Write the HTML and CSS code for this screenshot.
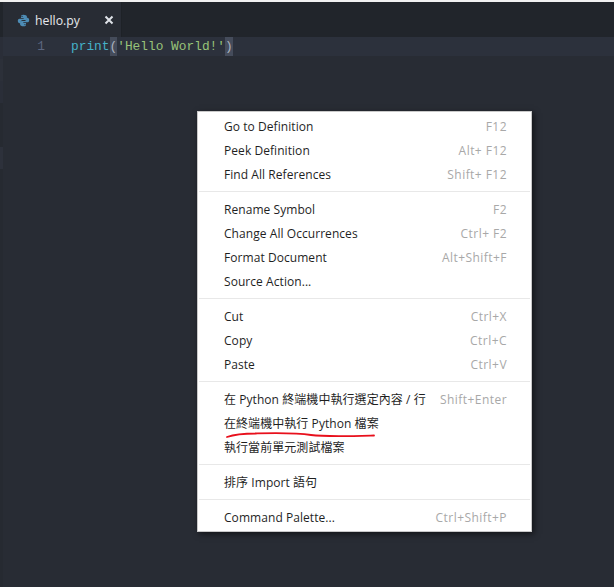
FILE: index.html
```html
<!DOCTYPE html>
<html lang="zh-Hant">
<head>
<meta charset="utf-8">
<title>hello.py</title>
<link rel="stylesheet" href="styles.css">
</head>
<body>
<div class="topline"></div>
<div class="workbench">
  <div class="activity">
    <div class="a-block a1"></div>
    <div class="a-block a2"></div>
    <div class="a-block a3"></div>
    <div class="a-block a4"></div>
    <div class="a-block a5"></div>
    <div class="a-block a6"></div>
  </div>
  <div class="main">
    <div class="tabbar">
      <div class="tab">
        <svg class="py" viewBox="0 0 16 16" width="13" height="13" aria-hidden="true">
          <path fill="#4d8cb5" d="M7.900 1C5.200 1 4.900 2.100 4.900 3.200V5h3.300v.7H3.200C1.900 5.700 1 6.800 1 8.400s.9 3.100 2.200 3.100h1.500V9.600c0-1.300 1.100-2.300 2.400-2.300h3.200c1.100 0 1.900-.9 1.900-1.900V3.200C12 1.900 10.400 1 7.900 1zM6.200 2.200a.75.75 0 1 1 0 1.500.75.75 0 0 1 0-1.500z"/>
          <path fill="#4d8cb5" d="M8.100 15c2.700 0 3-1.100 3-2.200V11H7.800v-.7h5c1.300 0 2.200-1.100 2.200-2.700s-.9-3.100-2.200-3.100h-1.500v1.900c0 1.300-1.100 2.300-2.400 2.300H5.700c-1.100 0-1.900.9-1.900 1.900v2.200C3.800 14.100 5.600 15 8.100 15zm1.700-1.200a.75.75 0 1 1 0-1.500.75.75 0 0 1 0 1.500z"/>
        </svg>
        <span class="tab-name">hello.py</span>
        <svg class="close" viewBox="0 0 10 10" width="10" height="10" aria-hidden="true">
          <path d="M1.500 1.500l7 7M8.500 1.500l-7 7" stroke="#dfe2e8" stroke-width="2" fill="none"/>
        </svg>
      </div>
    </div>
    <div class="editor">
      <div class="line">
        <span class="ln">1</span>
        <code class="code"><span class="fn">print</span><span class="br">(</span><span class="str">'Hello World!'</span><span class="br">)</span></code>
      </div>
    </div>
  </div>
</div>
<div class="menu">
  <div class="item"><span>Go to Definition</span><span class="key">F12</span></div>
  <div class="item"><span>Peek Definition</span><span class="key">Alt+ F12</span></div>
  <div class="item"><span>Find All References</span><span class="key">Shift+ F12</span></div>
  <div class="sep"></div>
  <div class="item"><span>Rename Symbol</span><span class="key">F2</span></div>
  <div class="item"><span>Change All Occurrences</span><span class="key">Ctrl+ F2</span></div>
  <div class="item"><span>Format Document</span><span class="key">Alt+Shift+F</span></div>
  <div class="item"><span>Source Action...</span></div>
  <div class="sep"></div>
  <div class="item"><span>Cut</span><span class="key">Ctrl+X</span></div>
  <div class="item"><span>Copy</span><span class="key">Ctrl+C</span></div>
  <div class="item"><span>Paste</span><span class="key">Ctrl+V</span></div>
  <div class="sep"></div>
  <div class="item"><span>在 Python 終端機中執行選定內容 / 行</span><span class="key">Shift+Enter</span></div>
  <div class="item"><span>在終端機中執行 Python 檔案</span></div>
  <div class="item"><span>執行當前單元測試檔案</span></div>
  <div class="sep"></div>
  <div class="item"><span>排序 Import 語句</span></div>
  <div class="sep"></div>
  <div class="item"><span>Command Palette...</span><span class="key">Ctrl+Shift+P</span></div>
  <svg class="scribble" viewBox="0 0 160 8" width="160" height="8" aria-hidden="true">
    <path d="M1 6C8 3.500 18 2.500 30 2.500C50 2 68 1.500 85 4C100 6 130 5 148 4.500" fill="none" stroke="#e8101c" stroke-width="1.800" stroke-linecap="round"/>
  </svg>
</div>
</body>
</html>
```
FILE: styles.css
```css
* { box-sizing: border-box; }
html, body { margin: 0; height: 100%; }
body {
  background: #282c34;
  overflow: hidden;
  font-family: "Open Sans", "Noto Sans CJK TC", sans-serif;
}
.topline { height: 2px; background: #f1f1f1; }
.workbench { display: flex; height: 585px; }
.activity {
  width: 3px;
  background: #262a31;
  display: flex;
  flex-direction: column;
}
.a1 { height: 35px; background: #21252b; }
.a2 { height: 22px; background: #2a2e38; }
.a3 { height: 22px; background: #2c3039; }
.a4 { height: 22px; background: #2a2e38; }
.a5 { height: 44px; background: #262a31; }
.a6 { height: 22px; background: #2d313b; }
.main { flex: 1; min-width: 0; }
.tabbar { height: 35px; background: #21252b; display: flex; }
.tab {
  width: 119px;
  background: #282c34;
  border-right: 1px solid #1e2227;
  display: flex;
  align-items: center;
  padding: 1px 0 0 14px;
  color: #e6e8ec;
  font-size: 12.300px;
}
.py { flex: none; }
.tab-name { margin-left: 5px; flex: 1; }
.close { margin-right: 7px; flex: none; }
.editor { height: 550px; }
.line {
  height: 19px;
  background: #2c313c;
  display: flex;
  align-items: center;
}
.ln {
  width: 42px;
  text-align: right;
  color: #5c667f;
  font: 12.830px "Liberation Mono", monospace;
}
.code {
  margin-left: 26px;
  font: 12.830px "Liberation Mono", monospace;
  line-height: 19px;
  color: #abb2bf;
  white-space: pre;
}
.fn { color: #45b1c8; }
.str { color: #98c379; }
.br { background: #454c5b; color: #abb2bf; display: inline-block; height: 19px; }
.menu {
  position: absolute;
  left: 197px;
  top: 111px;
  width: 335px;
  height: 421px;
  padding: 2px 1px 1px;
  background: #fff;
  border: 1px solid #c9c9c9;
  box-shadow: 2px 2px 6px rgba(0, 0, 0, .55);
  font-size: 12px;
  letter-spacing: .06px;
  color: #1f1f1f;
}
.item {
  height: 24px;
  padding: 0 23px 0 25px;
  display: flex;
  align-items: center;
  justify-content: space-between;
  white-space: nowrap;
}
.key { color: #a8a8a8; letter-spacing: .45px; }
.sep { height: 1px; margin: 5px 0; background: #e8e8e8; }
.scribble { position: absolute; left: 28px; top: 319px; }
```
